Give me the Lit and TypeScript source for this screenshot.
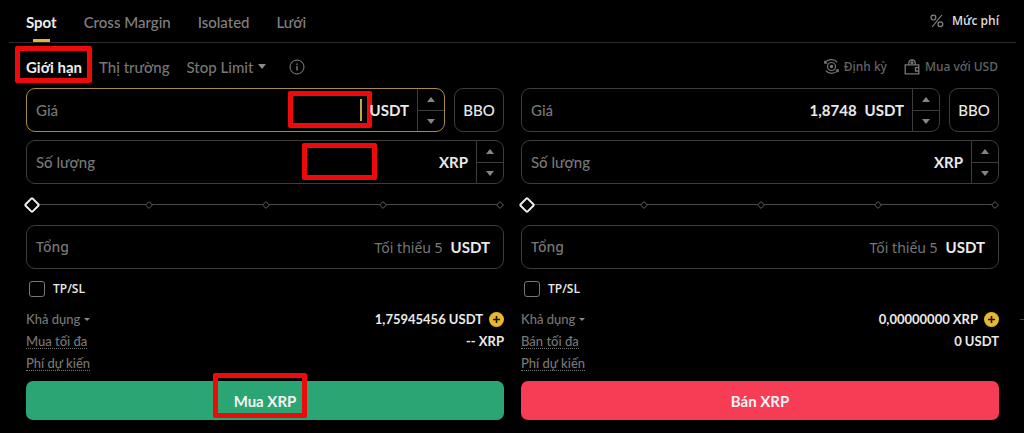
import { LitElement, html, css, svg } from "lit";
import { customElement, property } from "lit/decorators.js";

const base = css`
  :host {
    display: block;
    box-sizing: border-box;
    color: #eaeaea;
    font-family: Lato, "Noto Sans", sans-serif;
    font-size: 15px;
    font-weight: 500;
    line-height: 20px;
  }
  *,
  *::before,
  *::after {
    box-sizing: border-box;
  }
  button,
  input {
    margin: 0;
    padding: 0;
    border: 0;
    background: none;
    color: inherit;
    font: inherit;
    outline: none;
  }
  svg {
    display: block;
    flex: none;
  }
  .mark {
    position: absolute;
    border: 5px solid #ee0a0a;
    border-radius: 2px;
    pointer-events: none;
  }
`;

const caretDown = svg`<svg width="8" height="5" viewBox="0 0 8 5"><path d="M0 0h8L4 5z" fill="#8a8a8a"/></svg>`;
const smallCaret = svg`<svg width="6" height="3" viewBox="0 0 6 3"><path d="M0 0h6L3 3z" fill="#8a8a8a"/></svg>`;
const arrowUp = svg`<svg width="8" height="5" viewBox="0 0 8 5"><path d="M0 5h8L4 0z" fill="#858585"/></svg>`;
const arrowDown = svg`<svg width="8" height="5" viewBox="0 0 8 5"><path d="M0 0h8L4 5z" fill="#858585"/></svg>`;

@customElement("order-form")
export class OrderForm extends LitElement {
  @property() side = "buy";
  @property() price = "";
  @property() available = "";
  @property() maxLabel = "";
  @property() maxValue = "";
  @property() action = "";

  static styles = [
    base,
    css`
      .row {
        display: flex;
        gap: 9px;
        margin-bottom: 8px;
      }
      .field {
        position: relative;
        display: flex;
        align-items: center;
        flex: 1;
        min-width: 0;
        height: 44px;
        padding-left: 9px;
        border: 1px solid #3d3d3d;
        border-radius: 9px;
      }
      .focused {
        border-color: #a98c3c;
      }
      .field label {
        color: #777;
        white-space: nowrap;
      }
      .field input {
        flex: 1;
        width: 0;
        min-width: 0;
        text-align: right;
        font-weight: 700;
      }
      .field input::placeholder {
        color: #777;
        font-family: "Noto Sans", sans-serif;
        font-weight: 400;
        font-size: 14px;
        opacity: 1;
      }
      .caret {
        width: 2px;
        height: 22px;
        margin-left: 2px;
        background: #c9a544;
      }
      .unit {
        position: relative;
        z-index: 1;
        margin: 0 8px;
        font-weight: 700;
      }
      .total .unit {
        margin-right: 13px;
      }
      .total label {
        font-family: "Noto Sans", sans-serif;
        font-size: 14px;
      }
      .stepper {
        display: grid;
        grid-template-rows: 1fr 1fr;
        width: 27px;
        height: 100%;
        border-left: 1px solid #3d3d3d;
      }
      .stepper button {
        display: grid;
        place-items: center;
      }
      .stepper button + button {
        border-top: 1px solid #3d3d3d;
      }
      .bbo {
        width: 50px;
        height: 44px;
        border: 1px solid #3d3d3d;
        border-radius: 9px;
      }
      .slider {
        position: relative;
        display: flex;
        align-items: center;
        height: 41px;
        margin-top: -8px;
      }
      .ticks {
        position: absolute;
        left: 2px;
        right: 0;
        top: 0;
        bottom: 0;
        display: flex;
        align-items: center;
        justify-content: space-between;
      }
      .ticks::before {
        content: "";
        position: absolute;
        left: 4px;
        right: 4px;
        top: 20px;
        height: 1px;
        background: #484848;
      }
      .tick {
        position: relative;
        width: 8px;
        height: 8px;
      }
      .slider input {
        position: relative;
        appearance: none;
        flex: 1;
        height: 20px;
        cursor: pointer;
      }
      .slider input::-webkit-slider-thumb {
        appearance: none;
        width: 12px;
        height: 12px;
        border: 2px solid #eee;
        border-radius: 2px;
        background: #000;
        transform: rotate(45deg);
      }
      .tpsl {
        display: flex;
        align-items: center;
        gap: 8px;
        height: 39px;
        padding-left: 3px;
        font: 600 12px/16px "Open Sans", sans-serif;
      }
      .tpsl input {
        appearance: none;
        width: 16px;
        height: 16px;
        border: 1px solid #777;
        border-radius: 3px;
      }
      .info {
        display: flex;
        align-items: center;
        justify-content: space-between;
        height: 22px;
        font-size: 13px;
        line-height: 14px;
      }
      .info .name {
        display: flex;
        align-items: center;
        gap: 4px;
        color: #777;
      }
      .info .hint {
        border-bottom: 1px dotted #777;
      }
      .value {
        display: flex;
        align-items: center;
        gap: 6px;
        font-weight: 700;
      }
      .submit-wrap {
        position: relative;
        margin-top: 7px;
      }
      .submit {
        display: block;
        width: 100%;
        height: 39px;
        border-radius: 7px;
        font-weight: 700;
        color: #f4f4f4;
      }
      .buy {
        background: #2aa573;
      }
      .sell {
        background: #f73d56;
      }
      .mark-price {
        right: 72px;
        top: 2px;
        width: 84px;
        height: 37px;
      }
      .mark-amount {
        right: 126px;
        top: 2px;
        width: 75px;
        height: 37px;
      }
      .mark-submit {
        left: calc(50% - 52px);
        top: -8px;
        width: 94px;
        height: 45px;
      }
    `,
  ];

  private stepper() {
    return html`<div class="stepper">
      <button aria-label="+">${arrowUp}</button>
      <button aria-label="-">${arrowDown}</button>
    </div>`;
  }

  render() {
    const buy = this.side === "buy";
    return html`
      <div class="row">
        <div class="field ${buy ? "focused" : ""}">
          <label for="price">Giá</label>
          <input id="price" .value=${this.price} />
          ${buy ? html`<span class="caret"></span>` : ""}
          <span class="unit">USDT</span>
          ${this.stepper()}
          ${buy ? html`<span class="mark mark-price"></span>` : ""}
        </div>
        <button class="bbo">BBO</button>
      </div>
      <div class="row">
        <div class="field">
          <label for="amount">Số lượng</label>
          <input id="amount" />
          <span class="unit">XRP</span>
          ${this.stepper()}
          ${buy ? html`<span class="mark mark-amount"></span>` : ""}
        </div>
      </div>
      <div class="slider">
        <div class="ticks">
          ${[0, 25, 50, 75, 100].map(
            () => svg`<svg class="tick" viewBox="0 0 8 8"><path d="M4 .6 7.4 4 4 7.4.6 4z" fill="#000" stroke="#606060"/></svg>`
          )}
        </div>
        <input type="range" min="0" max="100" value="0" aria-label="%" />
      </div>
      <div class="field total">
        <label for="total">Tổng</label>
        <input id="total" placeholder="Tối thiểu 5" />
        <span class="unit">USDT</span>
      </div>
      <label class="tpsl"><input type="checkbox" />TP/SL</label>
      <div class="info">
        <button class="name">Khả dụng ${smallCaret}</button>
        <span class="value">
          ${this.available}
          <svg width="15" height="15" viewBox="0 0 15 15">
            <circle cx="7.5" cy="7.5" r="7.5" fill="#e9b92c" />
            <path d="M7.5 4v7M4 7.5h7" stroke="#1b1608" stroke-width="1.6" />
          </svg>
        </span>
      </div>
      <div class="info">
        <span class="name hint">${this.maxLabel}</span>
        <span class="value">${this.maxValue}</span>
      </div>
      <div class="info"><span class="name hint">Phí dự kiến</span></div>
      <div class="submit-wrap">
        <button class="submit ${this.side}">${this.action}</button>
        ${buy ? html`<span class="mark mark-submit"></span>` : ""}
      </div>
    `;
  }
}

@customElement("app-root")
export class AppRoot extends LitElement {
  static styles = [
    base,
    css`
      :host {
        position: relative;
        min-height: 100vh;
        background: #000;
      }
      .top {
        display: flex;
        align-items: center;
        justify-content: space-between;
        height: 43px;
        margin: 0 8px 0 9px;
        padding: 0 17px;
        border-bottom: 1px solid #2b2b2b;
      }
      .tabs {
        display: flex;
        gap: 27px;
        height: 100%;
        padding-top: 2px;
      }
      .tab {
        position: relative;
        color: #808080;
      }
      .active {
        color: #eee;
        font-weight: 700;
      }
      .tab.active::after {
        content: "";
        position: absolute;
        left: calc(50% - 8px);
        bottom: 0;
        width: 17px;
        height: 3px;
        background: #e0b53f;
      }
      .fee {
        display: flex;
        align-items: center;
        gap: 8px;
        font: 600 12px/16px "Open Sans", sans-serif;
        color: #ddd;
        text-decoration: none;
      }
      .sub {
        display: flex;
        align-items: center;
        justify-content: space-between;
        height: 45px;
        padding: 2px 26px 0 26px;
      }
      .modes,
      .links {
        display: flex;
        align-items: center;
        gap: 17px;
        color: #777;
      }
      .modes button {
        position: relative;
        display: flex;
        align-items: center;
        gap: 5px;
      }
      .modes .info-button {
        margin-left: 6px;
      }
      .links a {
        display: flex;
        align-items: center;
        gap: 5px;
        color: #656565;
        font: 500 12px/16px "Noto Sans", sans-serif;
        text-decoration: none;
      }
      .mark-limit {
        left: -11px;
        top: -11px;
        width: 77px;
        height: 37px;
      }
      .forms {
        display: grid;
        grid-template-columns: 1fr 1fr;
        gap: 17px;
        padding: 0 25px 13px 26px;
      }
      .edge {
        position: absolute;
        right: 0;
        top: 319px;
        width: 4px;
        height: 1px;
        background: #444;
      }
    `,
  ];

  render() {
    return html`
      <header class="top">
        <nav class="tabs">
          <button class="tab active">Spot</button>
          <button class="tab">Cross Margin</button>
          <button class="tab">Isolated</button>
          <button class="tab">Lưới</button>
        </nav>
        <a class="fee" href="#">
          <svg width="14" height="14" viewBox="0 0 14 14" fill="none" stroke="#858585" stroke-width="1.2">
            <circle cx="3.4" cy="3.6" r="2.4" />
            <circle cx="10.4" cy="10.2" r="2.4" />
            <path d="M11.8 1 2.2 13" />
          </svg>
          Mức phí
        </a>
      </header>
      <div class="sub">
        <div class="modes">
          <button class="active">Giới hạn<span class="mark mark-limit"></span></button>
          <button>Thị trường</button>
          <button>Stop Limit ${caretDown}</button>
          <button class="info-button" aria-label="Info">
            <svg width="16" height="16" viewBox="0 0 16 16" fill="none" stroke="#858585">
              <circle cx="8" cy="8" r="7" />
              <path d="M8 7v4.5M8 4.5V6" stroke-width="1.3" />
            </svg>
          </button>
        </div>
        <div class="links">
          <a href="#">
            <svg width="15" height="15" viewBox="0 0 15 15" fill="none" stroke="#777" stroke-width="1.2">
              <circle cx="7.5" cy="7.5" r="4" />
              <circle cx="7.5" cy="7.5" r="1.1" fill="#777" />
              <path d="M.8 4.2C2.2 2 4.7.7 7.5.7c2.4 0 4.4 1 5.7 2.6M.8 1.8v2.4h2.4M14.2 10.8c-1.4 2.2-3.9 3.5-6.7 3.5-2.4 0-4.4-1-5.7-2.6M14.2 13.2v-2.4h-2.4" />
            </svg>
            Định kỳ
          </a>
          <a href="#">
            <svg width="16" height="16" viewBox="0 0 16 16" fill="none" stroke="#777" stroke-width="1.3">
              <path d="M1.2 5.8H14.8V14.8H1.2zM14.8 8.6H11.5V12H14.8" />
              <path d="M4.8 5.8V4A3.2 3.2 0 0 1 11.2 4V5.8M8 1v3.5M6.5 3.2 8 4.7l1.5-1.5" />
            </svg>
            Mua với USD
          </a>
        </div>
      </div>
      <main class="forms">
        <order-form
          side="buy"
          available="1,75945456 USDT"
          .maxLabel=${"Mua tối đa"}
          .maxValue=${"-- XRP"}
          action="Mua XRP"
        ></order-form>
        <order-form
          side="sell"
          price="1,8748"
          available="0,00000000 XRP"
          .maxLabel=${"Bán tối đa"}
          .maxValue=${"0 USDT"}
          action="Bán XRP"
        ></order-form>
      </main>
      <span class="edge"></span>
    `;
  }
}
